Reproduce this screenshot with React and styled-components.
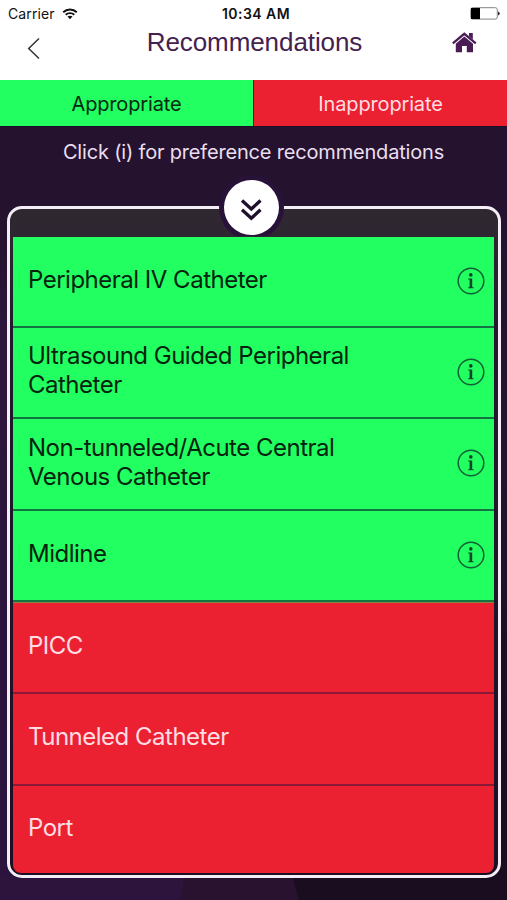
import styled, { createGlobalStyle } from "styled-components"

const GlobalStyle = createGlobalStyle`
* {
    box-sizing: border-box;
}
body {
    margin: 0;
    background: #25122e;
    font-family: Inter, "Liberation Sans", sans-serif;
}
`

const Screen = styled.div`
width: 507px;
height: 900px;
display: flex;
flex-direction: column;
overflow: hidden;
background:
    linear-gradient(100deg, #2c143d 0, #2c143d 181px, transparent 182px) 0 876px / 100% 24px no-repeat,
    linear-gradient(75deg, #28122f 0, #28122f 288px, #1b0d20 289px) 0 876px / 100% 24px no-repeat,
    linear-gradient(#25122e 0, #25122e 230px, #2d153c 330px, #2a133d 100%) 0 0 / 250px 100% no-repeat,
    linear-gradient(#25122e 0, #25122e 480px, #1b0d22 700px, #1b0d20 100%);
`

const StatusBar = styled.div`
height: 27px;
flex: none;
display: grid;
grid-template-columns: 1fr auto 1fr;
align-items: center;
padding: 0 7px 0 8px;
background: white;
color: #111;
`

const Carrier = styled.div`
display: flex;
align-items: center;
gap: 7px;
font-size: 14px;
letter-spacing: 0.1px;
`

const Time = styled.div`
padding-left: 4px;
font-size: 14px;
font-weight: 600;
letter-spacing: 0.45px;
`

const Battery = styled.svg`
justify-self: end;
`

const NavBar = styled.div`
height: 53px;
flex: none;
display: grid;
grid-template-columns: 80px 1fr 80px;
background: white;
`

const NavIcon = styled.svg`
display: block;
margin: ${props => props.$margin};
`

const Title = styled.h1`
margin: 0;
padding-left: 2px;
font-family: "Liberation Sans", Arial, sans-serif;
font-size: 26px;
font-weight: 400;
line-height: 30px;
letter-spacing: -0.08px;
text-align: center;
white-space: nowrap;
color: #44214f;
`

const Tabs = styled.div`
height: 47px;
flex: none;
display: grid;
grid-template-columns: 253px 254px;
border-bottom: 1px solid #1b1026;
`

const Tab = styled.div`
display: flex;
align-items: center;
justify-content: center;
padding-top: 1px;
font-size: 20px;
letter-spacing: -0.15px;
background: ${props => props.$bad ? "#eb2132" : "#21ff61"};
color: ${props => props.$bad ? "#ffdde2" : "#07270f"};
border-left: ${props => props.$bad ? "1px solid #4a1c30" : "none"};
`

const Hint = styled.p`
height: 79px;
flex: none;
margin: 0;
padding-top: 13px;
font-size: 20px;
line-height: 25px;
letter-spacing: -0.18px;
text-align: center;
color: #eadff0;
`

const Panel = styled.div`
position: relative;
width: 494px;
height: 672px;
flex: none;
margin-left: 7px;
padding: 28px 4px 2px 3px;
border: 3px solid #f4eef6;
border-radius: 15px;
background: linear-gradient(#302831 0, #2e2630 30px, #25182d 120px, #1b1024 100%);
`

const Toggle = styled.div`
position: absolute;
top: -34px;
left: 209px;
width: 65px;
height: 65px;
padding: 5px;
border-radius: 50%;
background: #29123a;
clip-path: inset(0 0 4px 0);
`

const ToggleCircle = styled.div`
height: 55px;
border-radius: 50%;
background: white;
`

const List = styled.div`
height: 636px;
overflow: hidden;
border-radius: 0 0 8px 8px;
`

const Row = styled.div`
height: 91.6px;
display: flex;
align-items: center;
justify-content: space-between;
padding: 0 9px 4px 15px;
background: ${props => props.$bad ? "#eb2132" : "#21ff61"};
color: ${props => props.$bad ? "#ffdde2" : "#07230e"};
border-top: ${props => props.$edge ? "1px solid #8f8040" : "none"};
border-bottom: 2px solid ${props => props.$bad ? "#8b1739" : "#147343"};
&:first-child {
    height: 90.6px;
}
&:last-child {
    border-bottom: none;
    padding-bottom: 7px;
}
`

const RowLabel = styled.div`
width: 360px;
font-size: 24px;
line-height: 29px;
letter-spacing: -0.5px;
`

const InfoIcon = styled.svg`
flex: none;
margin-top: 3px;
`

const Info = () => (
    <InfoIcon width="28" height="28" viewBox="0 0 28 28">
        <circle cx="14" cy="14" r="12.8" fill="none" stroke="#126034" strokeWidth="1.5" />
        <circle cx="13.8" cy="7.9" r="1.8" fill="#0d4428" />
        <path d="M11.2 11.5H15.2V20.3H16.6V21.3H11.2V20.3H12.6V12.5H11.2Z" fill="#0d4428" />
    </InfoIcon>
)

const rows = [
    { label: ["Peripheral IV Catheter"] },
    { label: ["Ultrasound Guided Peripheral", "Catheter"] },
    { label: ["Non-tunneled/Acute Central", "Venous Catheter"] },
    { label: ["Midline"] },
    { label: ["PICC"], bad: true, edge: true },
    { label: ["Tunneled Catheter"], bad: true },
    { label: ["Port"], bad: true },
]

function App() {
    return (
        <Screen>
            <GlobalStyle />
            <StatusBar>
                <Carrier>
                    <span>Carrier</span>
                    <svg width="16" height="12" viewBox="0 0 16 12">
                        <path d="M1.2 4.2C5 0.5 11 0.5 14.8 4.2M3.7 6.8C6.1 4.6 9.9 4.6 12.3 6.8" fill="none" stroke="#111" strokeWidth="1.9" />
                        <path d="M5.5 8.6C7 7.4 9 7.4 10.5 8.6L8 11.3Z" fill="#111" />
                    </svg>
                </Carrier>
                <Time>10:34 AM</Time>
                <Battery width="30" height="13" viewBox="0 0 30 13">
                    <rect x="0.8" y="0.7" width="26.5" height="11.4" rx="2" fill="white" stroke="#777" strokeWidth="0.9" />
                    <path d="M1 1H10V12H1Z" fill="black" />
                    <path d="M28 4.5Q29.8 5 29.8 6.5T28 8.5Z" fill="#333" />
                </Battery>
            </StatusBar>
            <NavBar>
                <NavIcon $margin="10px 0 0 27px" width="14" height="23" viewBox="0 0 14 23">
                    <path d="M12 1.5L1.7 11.5L12 21.5" fill="none" stroke="#333" strokeWidth="1.5" />
                </NavIcon>
                <Title>Recommendations</Title>
                <NavIcon $margin="5px 0 0 25px" width="26" height="21" viewBox="0 0 26 21">
                    <path d="M0.8 11.3L12.3 1.8L23.8 11.3" fill="none" stroke="#4a1c56" strokeWidth="2.2" />
                    <path d="M17 1H20.8V7.4L17 4.2Z" fill="#4a1c56" />
                    <path d="M12.3 4.5L21 11.8V20.2H14.8V14H10V20.2H3.8V11.8Z" fill="#4a1c56" />
                </NavIcon>
            </NavBar>
            <Tabs>
                <Tab>Appropriate</Tab>
                <Tab $bad>Inappropriate</Tab>
            </Tabs>
            <Hint>Click (i) for preference recommendations</Hint>
            <Panel>
                <Toggle>
                    <ToggleCircle>
                        <svg width="55" height="55" viewBox="0 0 55 55">
                            <path d="M18 20.5L27.3 29L36.5 20.5M18 29.8L27.3 38.3L36.5 29.8" fill="none" stroke="#20102c" strokeWidth="3.3" />
                        </svg>
                    </ToggleCircle>
                </Toggle>
                <List>
                    {rows.map(row => (
                        <Row key={row.label[0]} $bad={row.bad} $edge={row.edge}>
                            <RowLabel>
                                {row.label.map(line => <div key={line}>{line}</div>)}
                            </RowLabel>
                            {!row.bad && <Info />}
                        </Row>
                    ))}
                </List>
            </Panel>
        </Screen>
    )
}

export default App;
